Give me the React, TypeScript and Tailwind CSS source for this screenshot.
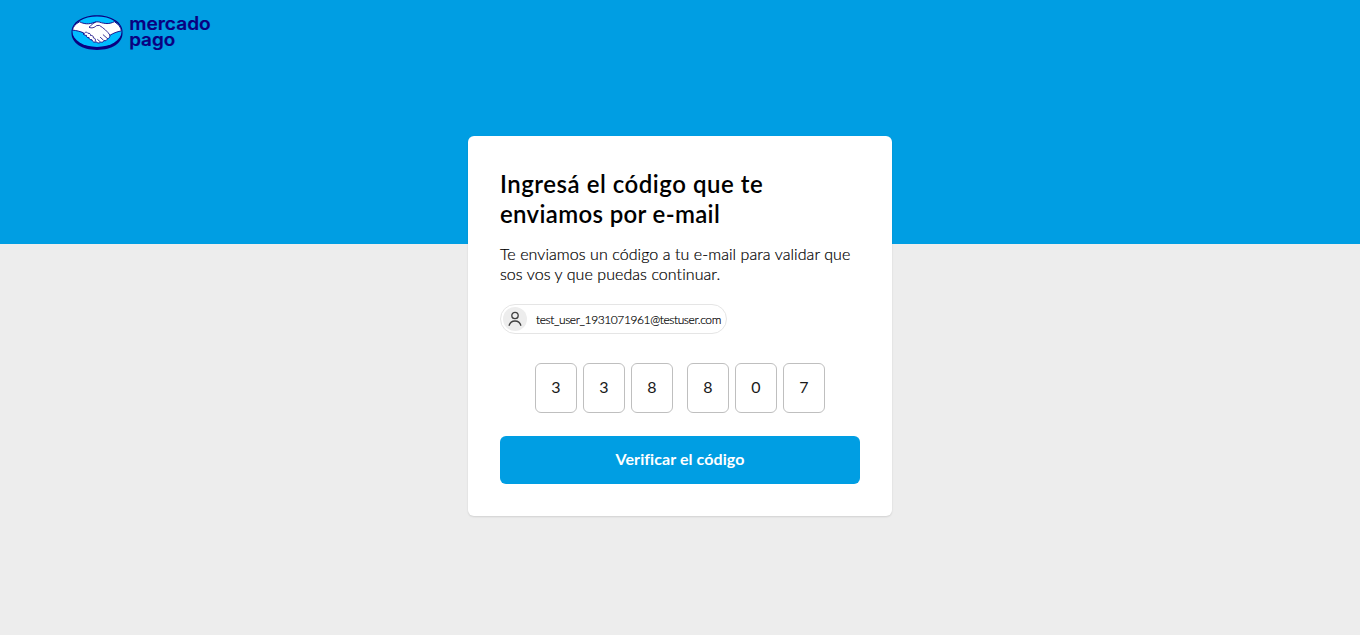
const code = ['3', '3', '8', '8', '0', '7'];

function HandshakeMark() {
  return (
    <svg width="52" height="36" viewBox="0 0 52 36" aria-hidden="true">
      <path
        d="M26 .3C11.900 .3.500 7.400.500 16.700v1.600C.500 27.800 10.700 35 26 35s25.500-7.200 25.500-16.700v-1.600C51.500 7.400 40.100.3 26 .3Z"
        fill="#0a0080"
      />
      <ellipse cx="26" cy="16.700" rx="24.500" ry="15.300" fill="#00bcff" />
      <path
        d="M8.600 6.800c4.500 2.400 9.400 2.700 14.800.6 1.600-.6 3.200-.8 5-.3 5.500 1.800 9.800 2.200 15-.4 4 2.400 6.500 5.500 7 9.200-4.700.8-8.300 2.400-11.700 4.500.5 1.600-.5 3.200-2.300 3.100-.3 1.800-1.700 2.600-3.300 2.100-.8 1.500-2.100 1.900-3.500 1.400-1.200 1.300-3 1.200-4.400-.1-2 .9-4.100-.3-4.300-2.200-1.700.3-2.900-.7-2.800-2.100-1.700.4-3-.8-2.700-2.300-1.800.4-3.200-.8-2.900-2.500-3.300-1.400-7-2.300-11-2.700.4-3.200 2.900-6.200 7.100-8.300Z"
        fill="#fff"
        stroke="#0a0080"
        strokeWidth=".9"
        strokeLinejoin="round"
      />
      <path
        d="M24.500 7.100c-2.500 1.200-4.500 3.400-6.500 5.100 2.600 1.500 5.600.3 7.600-1.600l2.800-.2c4.300 2.800 8 5.800 10.400 9.500M12.800 19.300c.6-2.500 3-2.700 4.200-1 1.600-.4 2.800.8 2.500 2.200 2-.4 3.100.8 2.900 2.400 1.800.1 2.500 1.600 1.900 3.300M35.800 23l-3.600-3.200M32.400 25.100l-3-2.700M28.900 26.500l-2.300-2"
        fill="none"
        stroke="#0a0080"
        strokeWidth=".8"
        strokeLinecap="round"
        strokeLinejoin="round"
      />
    </svg>
  );
}

function Logo() {
  return (
    <div className="flex items-start gap-1.5">
      <HandshakeMark />
      <svg width="82" height="38" viewBox="0 0 82 38" className="overflow-visible font-['Inter',sans-serif] font-semibold" fill="#0a0080" stroke="#0a0080" strokeWidth=".2" strokeLinejoin="round">
        <text x=".2" y="14.700" fontSize="18" textLength="81.500" lengthAdjust="spacingAndGlyphs">mercado</text>
        <text x=".2" y="30.900" fontSize="18" textLength="46" lengthAdjust="spacingAndGlyphs">pago</text>
      </svg>
    </div>
  );
}

function UserChip() {
  return (
    <div className="mt-[19px] flex h-[30px] w-[227px] items-center rounded-full border border-[#e5e5e5] pl-0.5">
      <div className="flex size-6 shrink-0 items-center justify-center rounded-full bg-[#ededed]">
        <svg width="14" height="16" viewBox="0 0 14 16" fill="none" stroke="#404040" strokeWidth="1.300" strokeLinecap="round">
          <circle cx="7" cy="4.500" r="3.200" />
          <path d="M1.200 14.300c.8-2.800 3-4.300 5.800-4.300s5 1.500 5.800 4.300" />
        </svg>
      </div>
      <span className="ml-[9px] mt-px whitespace-nowrap text-xs font-light leading-4 tracking-[-0.4px] text-black [-webkit-text-stroke:0.2px_#000]">
        test_user_1931071961@testuser.com
      </span>
    </div>
  );
}

function Digit({ value }: { value: string }) {
  return (
    <div className="flex h-[50px] w-[42px] items-center justify-center rounded-md border border-[#bfbfbf] pb-0.5 text-base text-[#1a1a1a]">
      {value}
    </div>
  );
}

export default function App() {
  return (
    <div className="h-[635px] bg-[#ededed] font-['Lato',sans-serif]">
      <header className="h-[244px] bg-[#009ee3] pl-[71px] pt-[15px]">
        <Logo />
      </header>
      <main className="mx-auto -mt-[108px] h-[380px] w-[424px] rounded-md bg-white px-8 pt-[33px] shadow-[0_1px_2px_rgba(0,0,0,0.12)]">
        <h1 className="text-2xl font-semibold leading-[30px] text-black">
          <span className="tracking-[0.52px]">Ingresá el código que te</span>
          <br />
          <span className="tracking-[0.34px]">enviamos por e-mail</span>
        </h1>
        <p className="mt-[15px] whitespace-nowrap text-base font-light leading-5 tracking-[0.07px] text-black [-webkit-text-stroke:0.2px_#000]">
          Te enviamos un código a tu e-mail para validar que
          <br />
          sos vos y que puedas continuar.
        </p>
        <div className="pt-px">
          <UserChip />
        </div>
        <div className="mt-[29px] flex justify-center gap-3.5">
          <div className="flex gap-1.5">
            {code.slice(0, 3).map((d, i) => <Digit key={i} value={d} />)}
          </div>
          <div className="flex gap-1.5">
            {code.slice(3).map((d, i) => <Digit key={i} value={d} />)}
          </div>
        </div>
        <button className="mt-[23px] block h-12 w-full rounded-md bg-[#009ee3] pb-0.5 text-base font-bold tracking-[0.08px] text-white">
          Verificar el código
        </button>
      </main>
    </div>
  );
}
